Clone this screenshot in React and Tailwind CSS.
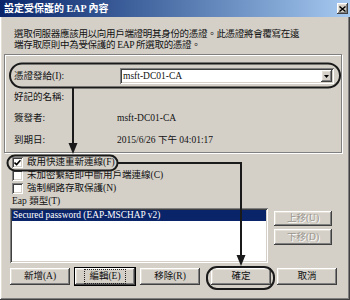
// App.jsx
// Win2000-style "設定受保護的 EAP 內容" dialog with callout ovals and arrows.

const RAISED =
  "shadow-[inset_-1px_-1px_#404040,inset_1px_1px_#ffffff,inset_-2px_-2px_#808080,inset_2px_2px_#e4e0d8]";
const SUNKEN =
  "shadow-[inset_1px_1px_#808080,inset_-1px_-1px_#ffffff,inset_2px_2px_#404040,inset_-2px_-2px_#d4d0c8]";

function Checkbox({ checked, label }) {
  return (
    <div className="flex h-[13px] items-center">
      <span className={`ml-[12px] grid h-[11px] w-[11px] place-items-center bg-white ${SUNKEN}`}>
        {checked && (
          <svg width="7" height="7" viewBox="0 0 7 7">
            <path d="M0.5 3.5 L2.6 5.6 L6.5 1.2" fill="none" stroke="#000" strokeWidth="1.6" />
          </svg>
        )}
      </span>
      <span className="ml-[4px] whitespace-nowrap">{label}</span>
    </div>
  );
}

function Button({ children, className = "", disabled, focused }) {
  return (
    <div
      className={`grid place-items-center bg-[#d4d0c8] ${
        focused ? "outline outline-1 outline-black" : ""
      } ${RAISED} ${className}`}
    >
      <span
        className={`whitespace-nowrap px-[3px] leading-[11px] ${
          focused ? "outline outline-1 outline-dotted outline-[#222] outline-offset-[1px]" : ""
        } ${disabled ? "text-[#9a968e] [text-shadow:1px_1px_0_#ffffff]" : ""}`}
      >
        {children}
      </span>
    </div>
  );
}

function InfoRow({ label, value, className = "" }) {
  return (
    <div className={`flex h-[12px] items-center ${className}`}>
      <span className="ml-[9px] w-[103px] whitespace-nowrap">{label}</span>
      {value && <span className="whitespace-nowrap">{value}</span>}
    </div>
  );
}

export default function App() {
  return (
    <div
      className={`relative h-[300px] w-[350px] overflow-hidden bg-[#d4d0c8] font-['Liberation_Serif','Noto_Sans_CJK_TC',serif] text-[9.5px] text-[#111] ${RAISED}`}
    >
      {/* Title bar */}
      <div className="flex h-[17px] items-center justify-between bg-linear-to-r from-[#0a246a] to-[#a6caf0] pl-[4px] pr-[2px]">
        <span className="whitespace-nowrap text-[10px] font-bold text-white">
          設定受保護的 EAP 內容
        </span>
        <span className={`grid h-[11px] w-[11px] place-items-center bg-[#d4d0c8] ${RAISED}`}>
          <svg width="7" height="6" viewBox="0 0 7 6">
            <path d="M0.5 0.5 L6.5 5.5 M6.5 0.5 L0.5 5.5" stroke="#000" strokeWidth="1.4" />
          </svg>
        </span>
      </div>

      {/* Description */}
      <p className="ml-[14px] mt-[12px] whitespace-nowrap leading-[11px] tracking-[-0.3px]">
        選取伺服器應該用以向用戶端證明其身份的憑證。此憑證將會覆寫在遠
        <br />
        端存取原則中為受保護的 EAP 所選取的憑證。
      </p>

      {/* Certificate group */}
      <div className="ml-[4px] mt-[3px] h-[99px] w-[338px] border border-[#808080] shadow-[inset_1px_1px_#ffffff,1px_1px_#ffffff]">
        <div className="mt-[13px] flex h-[16px] items-center">
          <span className="ml-[9px] w-[106px] whitespace-nowrap">憑證發給(I):</span>
          <div className={`flex h-[16px] w-[214px] items-center justify-between bg-white pl-[3px] pr-[2px] ${SUNKEN}`}>
            <span className="whitespace-nowrap">msft-DC01-CA</span>
            <span className={`grid h-[12px] w-[11px] place-items-center bg-[#d4d0c8] ${RAISED}`}>
              <svg width="5" height="3" viewBox="0 0 5 3">
                <path d="M0 0 H5 L2.5 3 Z" fill="#000" />
              </svg>
            </span>
          </div>
        </div>
        <InfoRow label="好記的名稱:" className="mt-[7px]" />
        <InfoRow label="簽發者:" value="msft-DC01-CA" className="mt-[9px]" />
        <InfoRow label="到期日:" value="2015/6/26 下午 04:01:17" className="mt-[10px]" />
      </div>

      {/* Options */}
      <div className="mt-[3px]">
        <Checkbox checked label="啟用快速重新連線(F)" />
        <Checkbox label="未加密繫結即中斷用戶端連線(C)" />
        <Checkbox label="強制網路存取保護(N)" />
      </div>
      <div className="ml-[12px] flex h-[13px] items-center whitespace-nowrap">Eap 類型(T)</div>

      {/* EAP list */}
      <div className="flex">
        <div className={`ml-[10px] h-[55px] w-[258px] bg-white p-[2px] ${SUNKEN}`}>
          <div className="flex h-[11px] items-center bg-[#0a246a] pl-[1px] text-[9.4px] text-white">
            <span className="whitespace-nowrap">Secured password (EAP-MSCHAP v2)</span>
          </div>
        </div>
        <div className="ml-[6px] mt-[3px] flex flex-col gap-[3px]">
          <Button disabled className="h-[15px] w-[58px]">上移(U)</Button>
          <Button disabled className="h-[16px] w-[58px]">下移(D)</Button>
        </div>
      </div>

      {/* Buttons */}
      <div className="mt-[5px] flex">
        <Button className="ml-[10px] h-[17px] w-[60px]">新增(A)</Button>
        <Button focused className="ml-[5px] h-[17px] w-[60px]">編輯(E)</Button>
        <Button className="ml-[5px] h-[17px] w-[60px]">移除(R)</Button>
        <Button className="ml-[11px] h-[17px] w-[60px]">確定</Button>
        <Button className="ml-[6px] h-[17px] w-[60px]">取消</Button>
      </div>

      {/* Callout annotations */}
      <svg className="pointer-events-none absolute inset-0" width="350" height="300" viewBox="0 0 350 300">
        <g fill="none" stroke="#1a1a1a" strokeWidth="2">
          <rect x="10" y="63.5" width="330" height="24" rx="12" />
          <rect x="7.5" y="155.5" width="110" height="15" rx="7.5" />
          <rect x="207" y="267" width="67" height="22" rx="10" />
          <path d="M73 88 V145" />
          <path d="M117.5 163 H241 V257" />
        </g>
        <g fill="#1a1a1a">
          <path d="M68.5 143 H77.5 L73 154 Z" />
          <path d="M236.5 255 H245.5 L241 266 Z" />
        </g>
      </svg>
    </div>
  );
}
